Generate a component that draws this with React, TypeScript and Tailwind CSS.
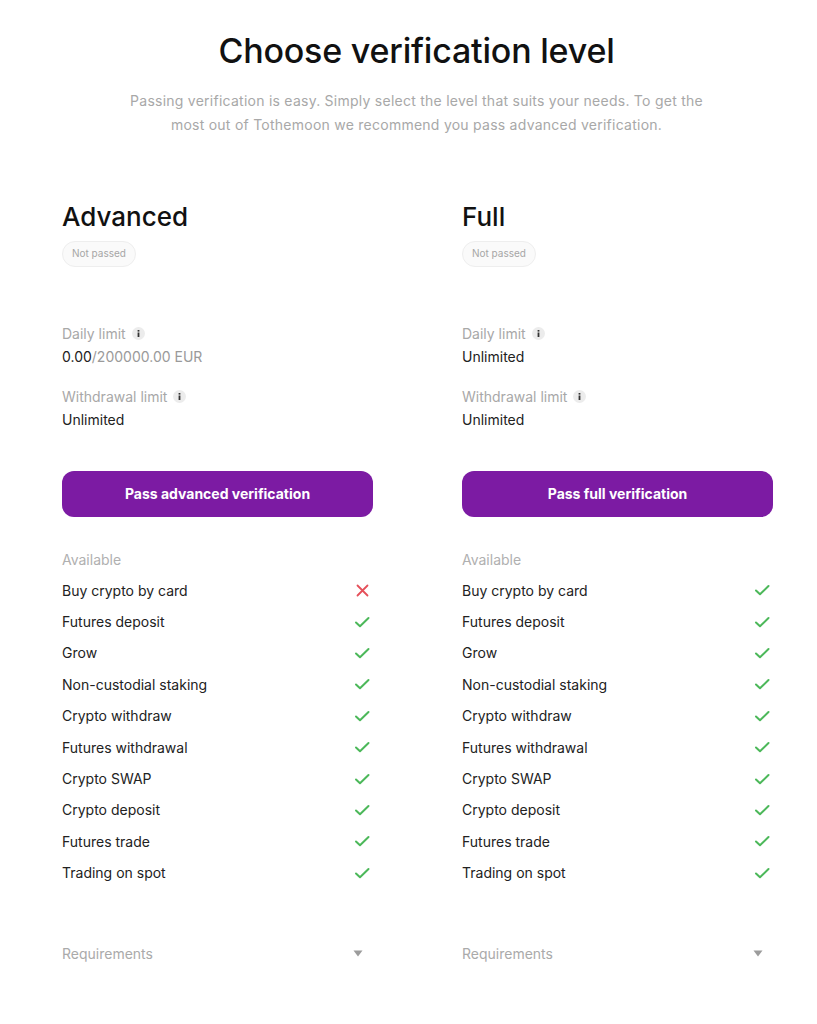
import React from "react";

type Level = {
  title: string;
  daily: React.ReactNode;
  withdrawal: string;
  button: string;
  features: { name: string; ok: boolean }[];
};

const FEATURES = [
  "Buy crypto by card",
  "Futures deposit",
  "Grow",
  "Non-custodial staking",
  "Crypto withdraw",
  "Futures withdrawal",
  "Crypto SWAP",
  "Crypto deposit",
  "Futures trade",
  "Trading on spot",
];

const levels: Level[] = [
  {
    title: "Advanced",
    daily: (
      <>
        <span className="text-[#222]">0.00</span>
        <span className="text-[#9a9a9a]">/200000.00 EUR</span>
      </>
    ),
    withdrawal: "Unlimited",
    button: "Pass advanced verification",
    features: FEATURES.map((name, i) => ({ name, ok: i !== 0 })),
  },
  {
    title: "Full",
    daily: <span className="text-[#222]">Unlimited</span>,
    withdrawal: "Unlimited",
    button: "Pass full verification",
    features: FEATURES.map((name) => ({ name, ok: true })),
  },
];

const InfoDot = () => (
  <span className="ml-1.5 inline-flex h-[13px] w-[13px] items-center justify-center rounded-full bg-[#ececec]">
    <svg width="3" height="7" viewBox="0 0 3 7">
      <rect x="0.6" y="0" width="1.8" height="1.6" fill="#333" />
      <rect x="0.6" y="2.5" width="1.8" height="4.5" fill="#333" />
    </svg>
  </span>
);

const Check = () => (
  <svg width="16" height="12" viewBox="0 0 16 12" fill="none">
    <path d="M2 6.5l4 3.8L14.5 2" stroke="#4cb85a" strokeWidth="2" strokeLinecap="round" strokeLinejoin="round" />
  </svg>
);

const Cross = () => (
  <svg width="13" height="13" viewBox="0 0 13 13" fill="none">
    <path d="M1.5 1.5l10 10M11.5 1.5l-10 10" stroke="#e5505a" strokeWidth="1.8" strokeLinecap="round" />
  </svg>
);

const LevelColumn = ({ level }: { level: Level }) => (
  <div className="flex w-[311px] flex-col">
    <h2 className="text-[26px] font-medium leading-[32px] text-[#111]">{level.title}</h2>
    <div className="mt-[6px]">
      <span className="inline-flex h-[26px] items-center rounded-full border border-[#eeeeee] bg-[#fafafa] px-[9px] text-[10px] text-[#a6a6a6]">
        Not passed
      </span>
    </div>

    <div className="mt-[57px] flex items-center text-[14px] leading-[20px] text-[#a8a8a8]">
      Daily limit
      <InfoDot />
    </div>
    <div className="mt-[3px] text-[14px] leading-[20px]">{level.daily}</div>

    <div className="mt-[20px] flex items-center text-[14px] leading-[20px] text-[#a8a8a8]">
      Withdrawal limit
      <InfoDot />
    </div>
    <div className="mt-[3px] text-[14px] leading-[20px] text-[#222]">{level.withdrawal}</div>

    <button
      type="button"
      className="mt-[41px] h-[46px] w-full rounded-[12px] bg-[#7c1ba3] text-[14px] font-bold text-white"
    >
      {level.button}
    </button>

    <div className="mt-[33px] text-[14px] leading-[20px] text-[#b0b0b0]">Available</div>
    <ul className="mt-[5px] flex flex-col">
      {level.features.map((f) => (
        <li key={f.name} className="flex h-[31.4px] items-center justify-between pr-[3px] text-[14px] text-[#222]">
          <span>{f.name}</span>
          <span className="flex w-[16px] justify-center">{f.ok ? <Check /> : <Cross />}</span>
        </li>
      ))}
    </ul>

    <div className="mt-[55px] flex items-center justify-between pr-[10px] text-[14px] text-[#aaaaaa]">
      <span>Requirements</span>
      <svg width="10" height="7" viewBox="0 0 10 7">
        <path d="M0.5 0.5h9L5 6.5z" fill="#9c9c9c" />
      </svg>
    </div>
  </div>
);

export default function App() {
  return (
    <div className="min-h-screen bg-white font-['Inter',sans-serif]">
      <div className="flex flex-col items-center pl-[16px] pt-[30px]">
        <h1 className="text-[34px] font-medium leading-[42px] tracking-[-0.2px] text-[#111]">
          Choose verification level
        </h1>
        <p className="mt-[17px] w-[590px] text-center text-[14px] leading-[24px] tracking-[0.25px] text-[#a8a8a8]">
          Passing verification is easy. Simply select the level that suits your needs. To get the most out of
          Tothemoon we recommend you pass advanced verification.
        </p>
      </div>
      <div className="mt-[64px] flex gap-[89px] pl-[62px]">
        {levels.map((l) => (
          <LevelColumn key={l.title} level={l} />
        ))}
      </div>
    </div>
  );
}
